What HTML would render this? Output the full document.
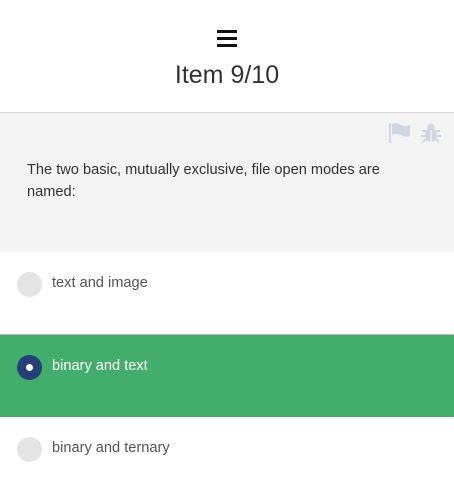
<!DOCTYPE html><html><head><style>
body{margin:0;width:454px;height:500px;font-family:"Liberation Sans",sans-serif;background:#fff;position:relative;overflow:hidden}
.a{position:absolute}
.bar{position:absolute;left:217px;width:20px;height:3px;background:#111}
.opt{position:absolute;left:0;width:454px;height:82px}
.r{position:absolute;left:17px;top:20px;width:25px;height:25px;border-radius:50%;background:#e4e4e4}
.t{position:absolute;left:52px;top:23px;font-size:14.6px;color:#555}
</style></head><body>
<div class="bar" style="top:30px"></div><div class="bar" style="top:37px"></div><div class="bar" style="top:44px"></div>
<div class="a" style="top:61px;width:454px;text-align:center;font-size:25px;color:#333">Item 9/10</div>
<div class="a" style="top:112px;width:454px;height:1px;background:#d6d6d6"></div>
<div class="a" style="top:113px;width:454px;height:139px;background:#f4f4f4"></div>
<svg class="a" style="left:388px;top:122px" width="24" height="22" viewBox="0 0 24 22"><rect x="1" y="1" width="2" height="20" fill="#d0d7e2"/><path d="M4 2 Q9 0 13 3 Q17 5 22 3 V14 Q17 16 13 13 Q9 11 4 13Z" fill="#d0d7e2"/></svg>
<svg class="a" style="left:420px;top:122px" width="22" height="22" viewBox="0 0 22 22"><circle cx="11" cy="5" r="3.5" fill="#d0d7e2"/><ellipse cx="11" cy="13" rx="6" ry="7" fill="#d0d7e2"/><path d="M2 9h4M16 9h4M1 14h5M16 14h5M3 20l3-3M19 20l-3-3" stroke="#d0d7e2" stroke-width="2"/><rect x="10.3" y="8" width="1.4" height="12" fill="#f4f4f4"/></svg>
<div class="a" style="left:27px;top:159px;width:390px;font-size:14.6px;line-height:22px;color:#333">The two basic, mutually exclusive, file open modes are named:</div>
<div class="opt" style="top:252px"><div class="r"></div><div class="t">text and image</div></div>
<div class="a" style="top:334px;width:454px;height:1px;background:#bbb"></div>
<div class="opt" style="top:335px;background:#43ad6b"><div class="r" style="top:20px;background:#243f7a"><div style="position:absolute;left:9px;top:9px;width:7px;height:7px;border-radius:50%;background:#fff"></div></div><div class="t" style="color:#fff">binary and text</div></div>
<div class="opt" style="top:417px"><div class="r"></div><div class="t">binary and ternary</div></div>
</body></html>
